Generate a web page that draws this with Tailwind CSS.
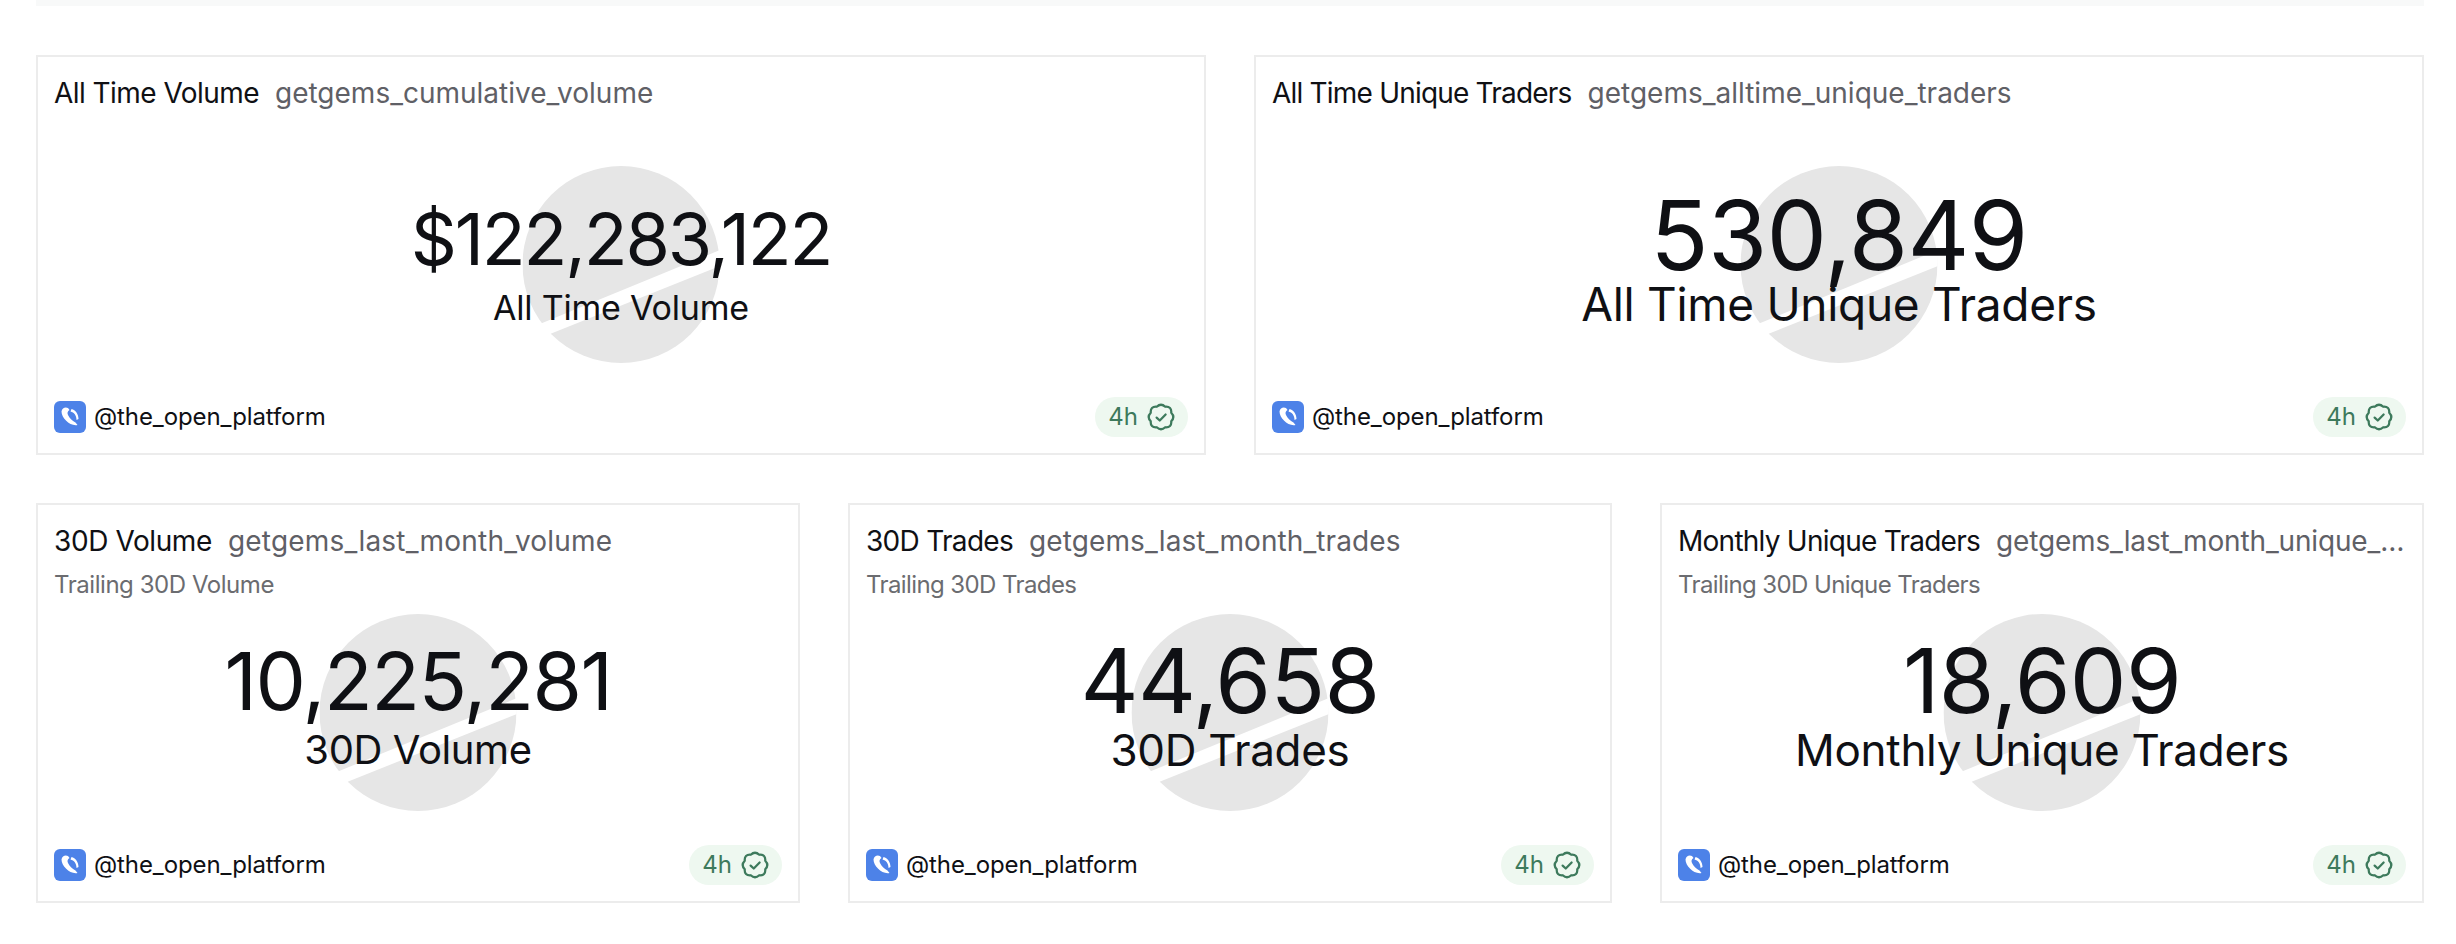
<!DOCTYPE html>
<html lang="en">
<head>
  <meta charset="UTF-8" />
  <title>Gems dashboard</title>
  <script src="https://cdn.jsdelivr.net/npm/@tailwindcss/browser@4"></script>
</head>
<body class="bg-white h-[944px] overflow-hidden font-['Inter',sans-serif] text-[#0f1014]">
  <div class="pl-[36px] pr-[32px]">
    <div class="h-[6px] bg-[#f8f9f9]"></div>

    <div class="grid grid-cols-2 gap-[48px] mt-[49px]">
      <div class="relative h-[400px] border-2 border-[#ececec] flex flex-col p-[16px]">
        <svg class="absolute left-1/2 -translate-x-1/2 top-[109px]" width="197" height="197" viewBox="0 0 197 197"><path d="M98.5 0a98.5 98.5 0 1 0 0 197a98.5 98.5 0 0 0 0-197z" fill="#e6e6e6"/><path d="M10 161L200 83V99L20 171z" fill="#fff"/></svg>
        <div class="relative flex gap-[16px] h-[40px] items-center text-[28px] whitespace-nowrap"><span class="tracking-[-0.55px]">All Time Volume</span><span class="text-[#5f6066]">getgems_cumulative_volume</span></div>
        <div class="relative flex-1 flex flex-col items-center justify-center pt-[22px]">
          <div class="text-[72px] leading-[84px] tracking-[-2.2px]">$122,283,122</div>
          <div class="text-[34px] leading-[54px] tracking-[-0.2px]">All Time Volume</div>
        </div>
        <div class="relative flex items-center justify-between h-[40px]">
          <div class="flex items-center gap-[8px] text-[24px] tracking-[-0.1px]">
            <svg width="32" height="32" viewBox="0 0 32 32"><rect width="32" height="32" rx="6" fill="#4d82e8"/><path d="M7.500 10.500C8 7 11.500 5.500 14 7L15.500 9C13.500 10 13 12 14 14C15.500 17 18 20 21.500 21.500L23.500 24C16 25.500 7.500 17 7.500 10.500zM17.500 8C21.500 9 24.500 13 24.500 18L22.500 19C22.500 14 20 11.500 16.500 10.500z" fill="#fff"/></svg>
            <span>@the_open_platform</span>
          </div>
          <div class="flex items-center gap-[8px] h-[40px] pl-[13px] pr-[12px] rounded-full bg-[#eef8f0] text-[#3d7a5c] text-[24px]">
            <span>4h</span>
            <svg width="30" height="30" viewBox="0 0 24 24" fill="none" stroke="#3d7a5c" stroke-width="1.8" stroke-linejoin="round" stroke-linecap="round"><path d="M8.6 3.800Q12 .5 15.400 3.800Q20.600 3.400 20.200 8.600Q23.500 12 20.200 15.400Q20.600 20.600 15.400 20.200Q12 23.500 8.600 20.200Q3.400 20.600 3.800 15.400Q.5 12 3.800 8.600Q3.400 3.400 8.600 3.800z"/><path d="M8.500 12.500l2.500 2.300 4.700-4.800"/></svg>
          </div>
        </div>
      </div>

      <div class="relative h-[400px] border-2 border-[#ececec] flex flex-col p-[16px]">
        <svg class="absolute left-1/2 -translate-x-1/2 top-[109px]" width="197" height="197" viewBox="0 0 197 197"><path d="M98.5 0a98.5 98.5 0 1 0 0 197a98.5 98.5 0 0 0 0-197z" fill="#e6e6e6"/><path d="M10 161L200 83V99L20 171z" fill="#fff"/></svg>
        <div class="relative flex gap-[16px] h-[40px] items-center text-[28px] whitespace-nowrap"><span class="tracking-[-0.8px]">All Time Unique Traders</span><span class="text-[#5f6066]">getgems_alltime_unique_traders</span></div>
        <div class="relative flex-1 flex flex-col items-center justify-center pt-[9px]">
          <div class="text-[96px] leading-[88px] tracking-[-0.7px]">530,849</div>
          <div class="text-[46px] leading-[50px] tracking-[-0.3px]">All Time Unique Traders</div>
        </div>
        <div class="relative flex items-center justify-between h-[40px]">
          <div class="flex items-center gap-[8px] text-[24px] tracking-[-0.1px]">
            <svg width="32" height="32" viewBox="0 0 32 32"><rect width="32" height="32" rx="6" fill="#4d82e8"/><path d="M7.500 10.500C8 7 11.500 5.500 14 7L15.500 9C13.500 10 13 12 14 14C15.500 17 18 20 21.500 21.500L23.500 24C16 25.500 7.500 17 7.500 10.500zM17.500 8C21.500 9 24.500 13 24.500 18L22.500 19C22.500 14 20 11.500 16.500 10.500z" fill="#fff"/></svg>
            <span>@the_open_platform</span>
          </div>
          <div class="flex items-center gap-[8px] h-[40px] pl-[13px] pr-[12px] rounded-full bg-[#eef8f0] text-[#3d7a5c] text-[24px]">
            <span>4h</span>
            <svg width="30" height="30" viewBox="0 0 24 24" fill="none" stroke="#3d7a5c" stroke-width="1.8" stroke-linejoin="round" stroke-linecap="round"><path d="M8.6 3.800Q12 .5 15.400 3.800Q20.600 3.400 20.200 8.600Q23.500 12 20.200 15.400Q20.600 20.600 15.400 20.200Q12 23.500 8.600 20.200Q3.400 20.600 3.800 15.400Q.5 12 3.800 8.600Q3.400 3.400 8.600 3.800z"/><path d="M8.500 12.500l2.500 2.300 4.700-4.800"/></svg>
          </div>
        </div>
      </div>
    </div>

    <div class="grid grid-cols-3 gap-[48px] mt-[48px]">
      <div class="relative h-[400px] border-2 border-[#ececec] flex flex-col p-[16px]">
        <svg class="absolute left-1/2 -translate-x-1/2 top-[109px]" width="197" height="197" viewBox="0 0 197 197"><path d="M98.5 0a98.5 98.5 0 1 0 0 197a98.5 98.5 0 0 0 0-197z" fill="#e6e6e6"/><path d="M10 161L200 83V99L20 171z" fill="#fff"/></svg>
        <div class="relative flex gap-[16px] h-[40px] items-center text-[28px] whitespace-nowrap"><span class="shrink-0 tracking-[-0.4px]">30D Volume</span><span class="truncate text-[#5f6066] tracking-[0.2px]">getgems_last_month_volume</span></div>
        <div class="relative mt-[3px] text-[24px] leading-[42px] text-[#6b6c70] tracking-[-0.45px]">Trailing 30D Volume</div>
        <div class="relative flex-1 flex flex-col items-center justify-center pb-[39px]">
          <div class="text-[80px] leading-[88px] tracking-[-1.5px]">10,225,281</div>
          <div class="text-[40px] leading-[50px] tracking-[-0.4px]">30D Volume</div>
        </div>
        <div class="relative flex items-center justify-between h-[40px]">
          <div class="flex items-center gap-[8px] text-[24px] tracking-[-0.1px]">
            <svg width="32" height="32" viewBox="0 0 32 32"><rect width="32" height="32" rx="6" fill="#4d82e8"/><path d="M7.500 10.500C8 7 11.500 5.500 14 7L15.500 9C13.500 10 13 12 14 14C15.500 17 18 20 21.500 21.500L23.500 24C16 25.500 7.500 17 7.500 10.500zM17.500 8C21.500 9 24.500 13 24.500 18L22.500 19C22.500 14 20 11.500 16.500 10.500z" fill="#fff"/></svg>
            <span>@the_open_platform</span>
          </div>
          <div class="flex items-center gap-[8px] h-[40px] pl-[13px] pr-[12px] rounded-full bg-[#eef8f0] text-[#3d7a5c] text-[24px]">
            <span>4h</span>
            <svg width="30" height="30" viewBox="0 0 24 24" fill="none" stroke="#3d7a5c" stroke-width="1.8" stroke-linejoin="round" stroke-linecap="round"><path d="M8.6 3.800Q12 .5 15.400 3.800Q20.600 3.400 20.200 8.600Q23.500 12 20.200 15.400Q20.600 20.600 15.400 20.200Q12 23.500 8.600 20.200Q3.400 20.600 3.800 15.400Q.5 12 3.800 8.600Q3.400 3.400 8.600 3.800z"/><path d="M8.500 12.500l2.500 2.300 4.700-4.800"/></svg>
          </div>
        </div>
      </div>

      <div class="relative h-[400px] border-2 border-[#ececec] flex flex-col p-[16px]">
        <svg class="absolute left-1/2 -translate-x-1/2 top-[109px]" width="197" height="197" viewBox="0 0 197 197"><path d="M98.5 0a98.5 98.5 0 1 0 0 197a98.5 98.5 0 0 0 0-197z" fill="#e6e6e6"/><path d="M10 161L200 83V99L20 171z" fill="#fff"/></svg>
        <div class="relative flex gap-[16px] h-[40px] items-center text-[28px] whitespace-nowrap"><span class="shrink-0 tracking-[-0.7px]">30D Trades</span><span class="truncate text-[#5f6066] tracking-[0.1px]">getgems_last_month_trades</span></div>
        <div class="relative mt-[3px] text-[24px] leading-[42px] text-[#6b6c70] tracking-[-0.6px]">Trailing 30D Trades</div>
        <div class="relative flex-1 flex flex-col items-center justify-center pb-[39px]">
          <div class="text-[90px] leading-[88px] tracking-[-0.7px]">44,658</div>
          <div class="text-[44px] leading-[50px] tracking-[-0.3px]">30D Trades</div>
        </div>
        <div class="relative flex items-center justify-between h-[40px]">
          <div class="flex items-center gap-[8px] text-[24px] tracking-[-0.1px]">
            <svg width="32" height="32" viewBox="0 0 32 32"><rect width="32" height="32" rx="6" fill="#4d82e8"/><path d="M7.500 10.500C8 7 11.500 5.500 14 7L15.500 9C13.500 10 13 12 14 14C15.500 17 18 20 21.500 21.500L23.500 24C16 25.500 7.500 17 7.500 10.500zM17.500 8C21.500 9 24.500 13 24.500 18L22.500 19C22.500 14 20 11.500 16.500 10.500z" fill="#fff"/></svg>
            <span>@the_open_platform</span>
          </div>
          <div class="flex items-center gap-[8px] h-[40px] pl-[13px] pr-[12px] rounded-full bg-[#eef8f0] text-[#3d7a5c] text-[24px]">
            <span>4h</span>
            <svg width="30" height="30" viewBox="0 0 24 24" fill="none" stroke="#3d7a5c" stroke-width="1.8" stroke-linejoin="round" stroke-linecap="round"><path d="M8.6 3.800Q12 .5 15.400 3.800Q20.600 3.400 20.200 8.600Q23.500 12 20.200 15.400Q20.600 20.600 15.400 20.200Q12 23.500 8.600 20.200Q3.400 20.600 3.800 15.400Q.5 12 3.800 8.600Q3.400 3.400 8.600 3.800z"/><path d="M8.500 12.500l2.500 2.300 4.700-4.800"/></svg>
          </div>
        </div>
      </div>

      <div class="relative h-[400px] border-2 border-[#ececec] flex flex-col p-[16px]">
        <svg class="absolute left-1/2 -translate-x-1/2 top-[109px]" width="197" height="197" viewBox="0 0 197 197"><path d="M98.5 0a98.5 98.5 0 1 0 0 197a98.5 98.5 0 0 0 0-197z" fill="#e6e6e6"/><path d="M10 161L200 83V99L20 171z" fill="#fff"/></svg>
        <div class="relative flex gap-[16px] h-[40px] items-center text-[28px] whitespace-nowrap"><span class="shrink-0 tracking-[-0.75px]">Monthly Unique Traders</span><span class="text-[#5f6066] tracking-[-0.15px]">getgems_last_month_unique_…</span></div>
        <div class="relative mt-[3px] text-[24px] leading-[42px] text-[#6b6c70] tracking-[-0.6px]">Trailing 30D Unique Traders</div>
        <div class="relative flex-1 flex flex-col items-center justify-center pb-[39px]">
          <div class="text-[90px] leading-[88px] tracking-[-0.7px]">18,609</div>
          <div class="text-[44px] leading-[50px] tracking-[-0.3px]">Monthly Unique Traders</div>
        </div>
        <div class="relative flex items-center justify-between h-[40px]">
          <div class="flex items-center gap-[8px] text-[24px] tracking-[-0.1px]">
            <svg width="32" height="32" viewBox="0 0 32 32"><rect width="32" height="32" rx="6" fill="#4d82e8"/><path d="M7.500 10.500C8 7 11.500 5.500 14 7L15.500 9C13.500 10 13 12 14 14C15.500 17 18 20 21.500 21.500L23.500 24C16 25.500 7.500 17 7.500 10.500zM17.500 8C21.500 9 24.500 13 24.500 18L22.500 19C22.500 14 20 11.500 16.500 10.500z" fill="#fff"/></svg>
            <span>@the_open_platform</span>
          </div>
          <div class="flex items-center gap-[8px] h-[40px] pl-[13px] pr-[12px] rounded-full bg-[#eef8f0] text-[#3d7a5c] text-[24px]">
            <span>4h</span>
            <svg width="30" height="30" viewBox="0 0 24 24" fill="none" stroke="#3d7a5c" stroke-width="1.8" stroke-linejoin="round" stroke-linecap="round"><path d="M8.6 3.800Q12 .5 15.400 3.800Q20.600 3.400 20.200 8.600Q23.500 12 20.200 15.400Q20.600 20.600 15.400 20.200Q12 23.500 8.600 20.200Q3.400 20.600 3.800 15.400Q.5 12 3.800 8.600Q3.400 3.400 8.600 3.800z"/><path d="M8.500 12.500l2.500 2.300 4.700-4.800"/></svg>
          </div>
        </div>
      </div>
    </div>
  </div>
</body>
</html>
